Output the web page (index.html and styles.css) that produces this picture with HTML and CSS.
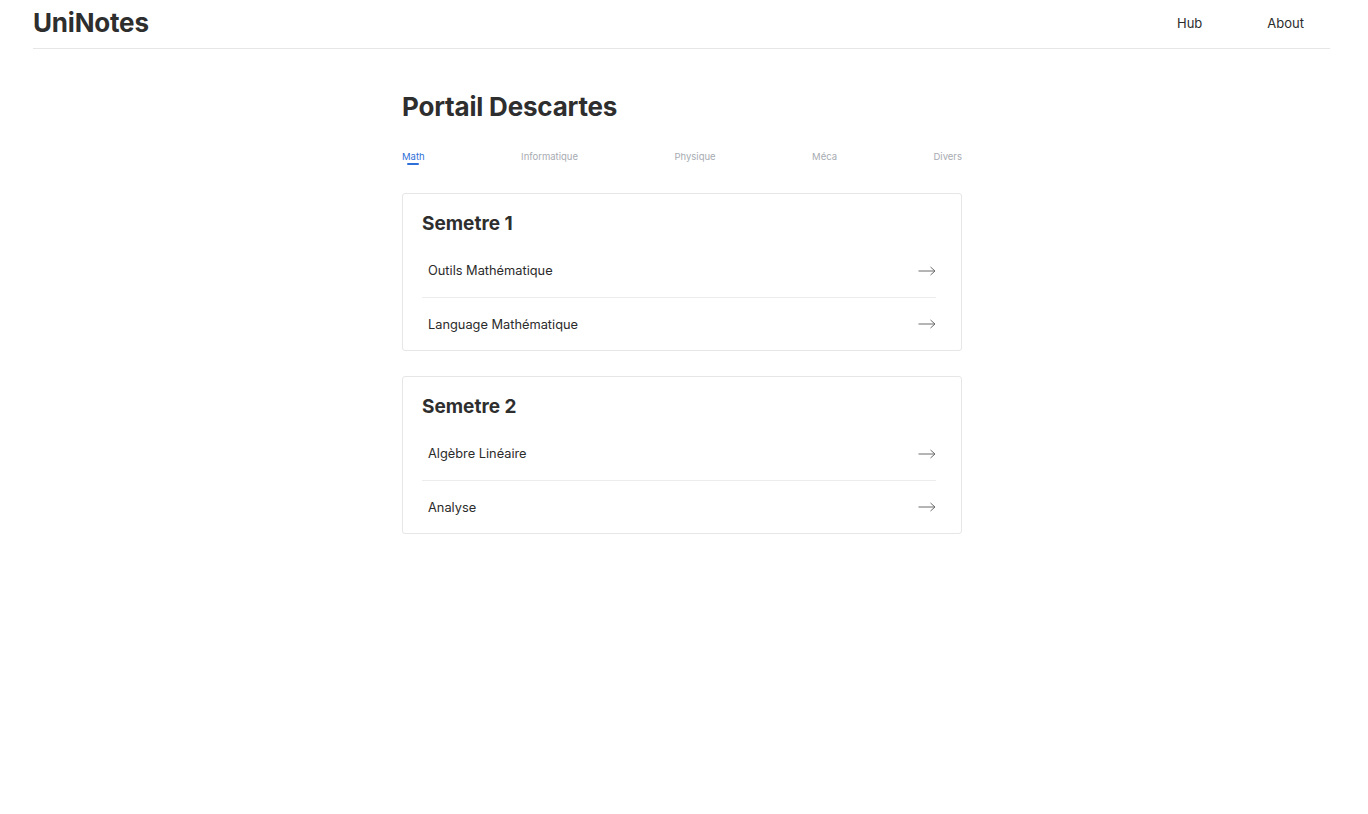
FILE: index.html
```html
<!DOCTYPE html>
<html lang="fr">
<head>
<meta charset="utf-8">
<title>UniNotes</title>
<link rel="stylesheet" href="styles.css">
</head>
<body>
<header class="topbar">
  <div class="brand">UniNotes</div>
  <nav class="nav">
    <a href="#" class="nav-link">Hub</a>
    <a href="#" class="nav-link">About</a>
  </nav>
</header>
<main class="main">
  <h1 class="title">Portail Descartes</h1>
  <div class="tabs">
    <span class="tab active">Math</span>
    <span class="tab">Informatique</span>
    <span class="tab">Physique</span>
    <span class="tab">Méca</span>
    <span class="tab">Divers</span>
  </div>
  <section class="card">
    <h2 class="card-title">Semetre 1</h2>
    <ul class="list">
      <li class="row"><span>Outils Mathématique</span><svg class="arrow" width="18" height="10" viewBox="0 0 18 10"><path d="M0.5 5H17M12.5 1L17 5L12.5 9" fill="none" stroke="#6b6b6b" stroke-width="1"/></svg></li>
      <li class="row"><span>Language Mathématique</span><svg class="arrow" width="18" height="10" viewBox="0 0 18 10"><path d="M0.5 5H17M12.5 1L17 5L12.5 9" fill="none" stroke="#6b6b6b" stroke-width="1"/></svg></li>
    </ul>
  </section>
  <section class="card">
    <h2 class="card-title">Semetre 2</h2>
    <ul class="list">
      <li class="row"><span>Algèbre Linéaire</span><svg class="arrow" width="18" height="10" viewBox="0 0 18 10"><path d="M0.5 5H17M12.5 1L17 5L12.5 9" fill="none" stroke="#6b6b6b" stroke-width="1"/></svg></li>
      <li class="row"><span>Analyse</span><svg class="arrow" width="18" height="10" viewBox="0 0 18 10"><path d="M0.5 5H17M12.5 1L17 5L12.5 9" fill="none" stroke="#6b6b6b" stroke-width="1"/></svg></li>
    </ul>
  </section>
</main>
</body>
</html>
```
FILE: styles.css
```css
* { box-sizing: border-box; }
html, body { margin: 0; padding: 0; background: #fff; }
body {
  font-family: Inter, "Noto Sans", "Liberation Sans", sans-serif;
  color: #2b2b2b;
}
.topbar {
  margin: 0 38px 0 33px;
  height: 49px;
  border-bottom: 1px solid #e6e6e6;
  display: flex;
  align-items: center;
  justify-content: space-between;
  padding-bottom: 3px;
}
.brand {
  font-size: 26px;
  font-weight: 700;
  color: #2e2e2e;
  letter-spacing: -0.2px;
}
.nav { display: flex; gap: 65px; padding-right: 26px; }
.nav-link {
  font-size: 13px;
  color: #2b2b2b;
  text-decoration: none;
}
.main {
  width: 560px;
  margin: 0 auto;
  padding-top: 40px;
  position: relative;
  left: -2px;
}
.title {
  margin: 0;
  font-size: 26px;
  font-weight: 700;
  color: #2e2e2e;
  line-height: 36px;
  letter-spacing: -0.2px;
}
.tabs {
  display: flex;
  justify-content: space-between;
  margin-top: 25px;
  height: 24px;
}
.tab {
  font-size: 9.5px;
  color: #a7abb2;
  line-height: 14px;
  height: 20px;
  position: relative;
}
.tab.active { color: #2f6fd8; }
.tab.active::after {
  content: "";
  position: absolute;
  left: 50%;
  top: 13px;
  width: 12px;
  margin-left: -6px;
  height: 2px;
  border-radius: 1px;
  background: #2f6fd8;
}
.card {
  margin-top: 19px;
  border: 1px solid #e6e6e6;
  border-radius: 3px;
  padding: 16px 25px 0 19px;
  margin-bottom: 25px;
}
.card-title {
  margin: 0;
  font-size: 19px;
  font-weight: 700;
  line-height: 28px;
  color: #2e2e2e;
}
.list { list-style: none; margin: 6px 0 0 0; padding: 0; }
.row {
  height: 53px;
  display: flex;
  align-items: center;
  justify-content: space-between;
  padding-left: 6px;
  font-size: 12.8px;
  color: #2b2b2b;
  border-top: 1px solid #ececec;
}
.row:first-child { border-top: none; }
.arrow { display: block; }
```
